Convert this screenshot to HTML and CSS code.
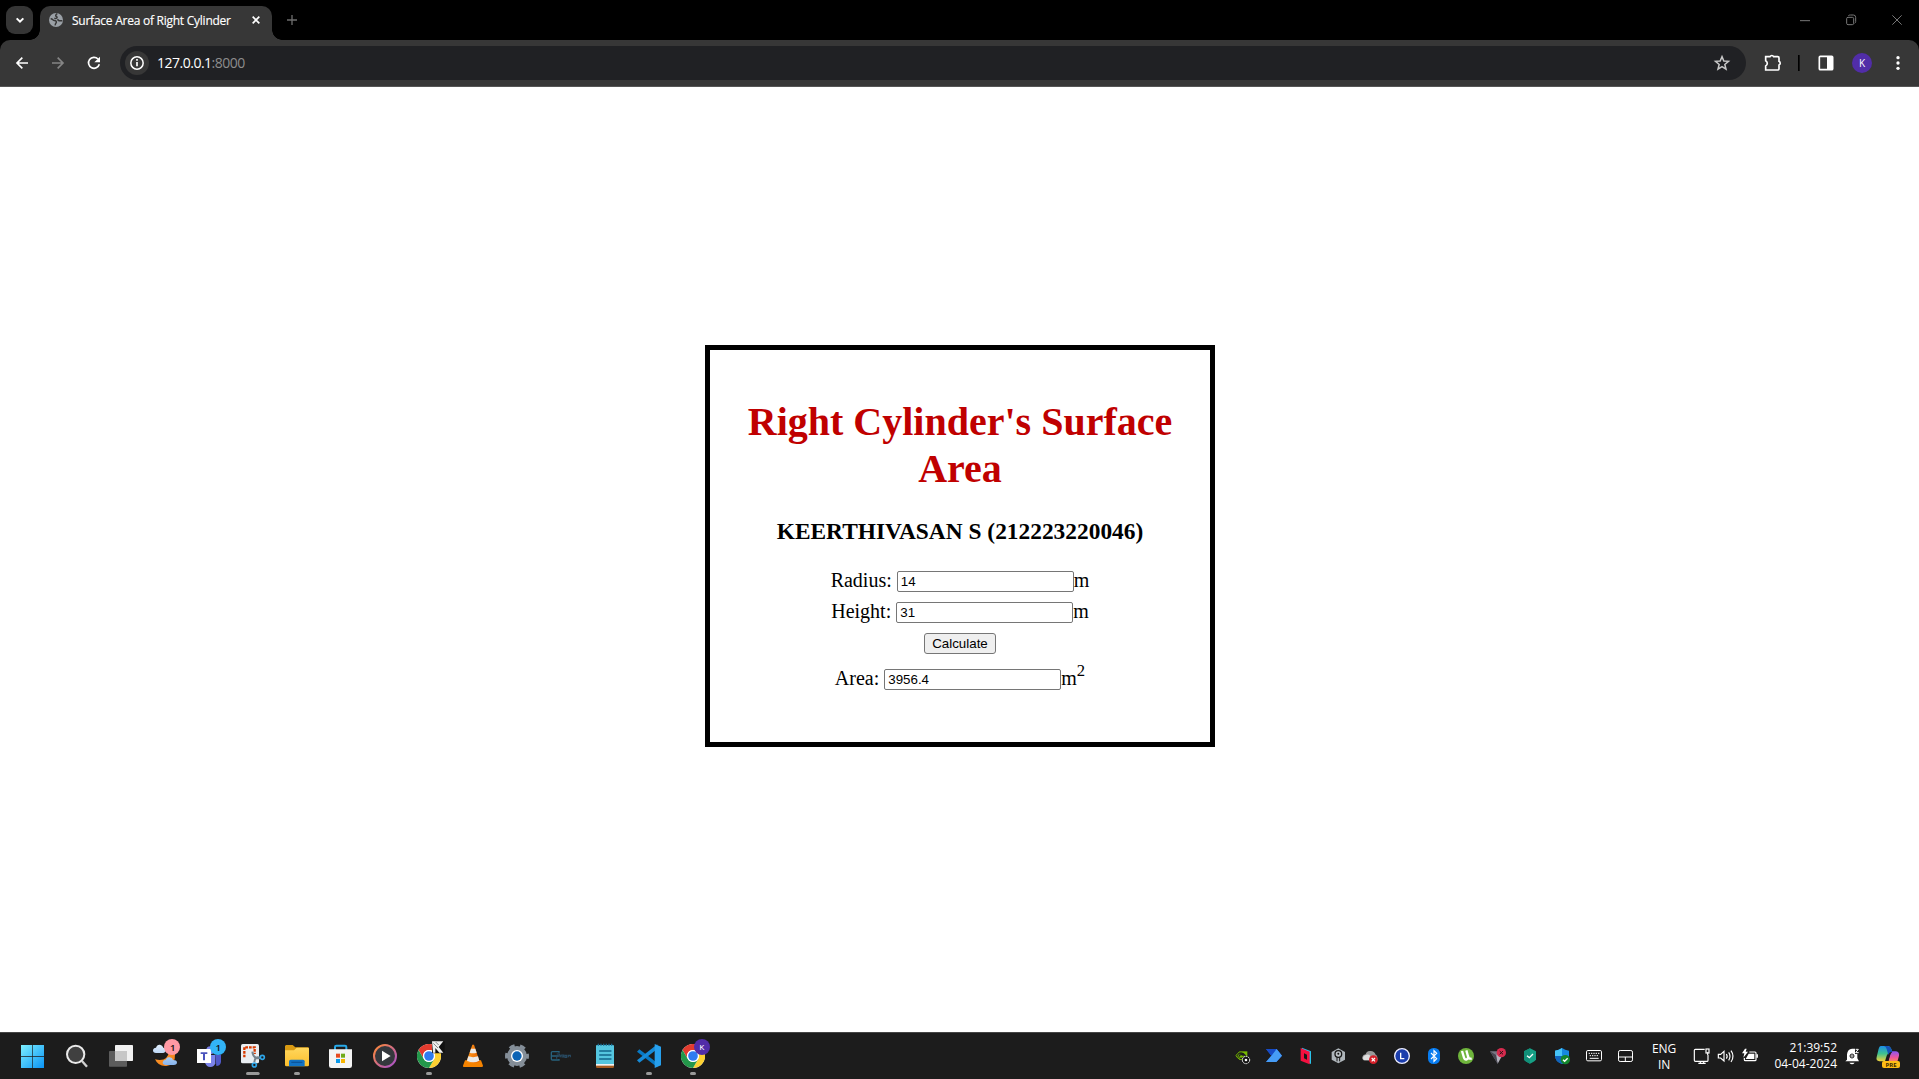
FILE: index.html
```html
<!DOCTYPE html>
<html lang="en">
<head>
<meta charset="utf-8">
<title>Surface Area of Right Cylinder</title>
<link rel="stylesheet" href="styles.css">
</head>
<body>
<svg class="defs" width="0" height="0">
  <defs>
    <linearGradient id="win" x1="0" y1="0" x2="1" y2="1"><stop offset="0" stop-color="#7df0ff"/><stop offset="1" stop-color="#0a93f5"/></linearGradient>
    <linearGradient id="folder" x1="0" y1="0" x2="0" y2="1"><stop offset="0" stop-color="#ffd75e"/><stop offset="1" stop-color="#fcbe2b"/></linearGradient>
    <linearGradient id="media" x1="0" y1="0" x2="1" y2="1"><stop offset="0" stop-color="#ff8a34"/><stop offset="1" stop-color="#a44fd0"/></linearGradient>
    <linearGradient id="moon" x1="0" y1="0" x2="1" y2="1"><stop offset="0" stop-color="#ff9d2e"/><stop offset="1" stop-color="#f07a16"/></linearGradient>
    <linearGradient id="cloud" x1="0" y1="0" x2="0" y2="1"><stop offset="0" stop-color="#e3effc"/><stop offset="1" stop-color="#86b4ee"/></linearGradient>
    <linearGradient id="cop1" x1="0" y1="0" x2="0" y2="1"><stop offset="0" stop-color="#1c8fe8"/><stop offset=".5" stop-color="#3ec28f"/><stop offset="1" stop-color="#f3d23a"/></linearGradient>
    <linearGradient id="cop2" x1="0" y1="0" x2="0" y2="1"><stop offset="0" stop-color="#8c55f4"/><stop offset=".6" stop-color="#f0569a"/><stop offset="1" stop-color="#fb8a5a"/></linearGradient>
    <linearGradient id="cone" x1="0" y1="0" x2="1" y2="0"><stop offset="0" stop-color="#ff9a1e"/><stop offset="1" stop-color="#e76500"/></linearGradient>
    <symbol id="chrome" viewBox="-36 -36 72 72">
      <circle r="36" fill="#fff"/>
      <path d="M-31.2-18A36 36 0 0 1 31.2-18H0A18 18 0 0 0-15.6 9Z" fill="#e33b2e"/>
      <path d="M31.2-18A36 36 0 0 1 0 36L15.6 9A18 18 0 0 0 0-18Z" fill="#fdd131"/>
      <path d="M0 36A36 36 0 0 1-31.2-18L-15.6 9A18 18 0 0 0 15.6 9Z" fill="#23974a"/>
      <circle r="18" fill="#fff"/><circle r="14.5" fill="#2f7cf0"/>
    </symbol>
  </defs>
</svg>

<header class="tabstrip">
  <button class="tab-search" aria-label="Search tabs"><svg width="27" height="28" viewBox="18 18 81 84"><path d="M50 55l10 10 10-10" fill="none" stroke="#fff" stroke-width="6"/></svg></button>
  <div class="tab">
    <svg width="16" height="16" viewBox="144 36 48 48"><circle cx="168" cy="60" r="21" fill="#9aa0a6"/><path d="M152 56q4 0 6 3t8 3q5 2 2 7-3 3-2 7M172 41q-7 4-4 8 4 1 3 4-3 3-8 2M187 62h-10l-5-4" fill="none" stroke="#373737" stroke-width="4.500"/></svg>
    <span class="tab-title">Surface Area of Right Cylinder</span>
    <svg class="tab-close" width="16" height="16" viewBox="744 36 48 48"><path d="M758 50l20 20M778 50l-20 20" stroke="#fff" stroke-width="5"/></svg>
  </div>
  <svg class="new-tab" width="20" height="20" viewBox="846 30 60 60"><path d="M876 45v30M861 60h30" stroke="#6c6c6c" stroke-width="4"/></svg>
  <svg class="window-controls" width="138" height="40" viewBox="303 0 414 120"><g fill="none" stroke="#777" stroke-width="3"><path d="M360 62h30M637 46l28 28M665 46l-28 28"/><rect x="500" y="52" width="21" height="22" rx="4"/><path d="M505 47q2-2 6-2h9q7 0 7 7v13q0 3-3 5"/></g></svg>
</header>

<nav class="toolbar">
  <svg class="nav-icons" width="108" height="46" viewBox="0 120 324 138"><g fill="none" stroke-width="5"><path d="M84 189H53M67 173l-16 16 16 16" stroke="#fff"/><path d="M156 189h31M173 173l16 16-16 16" stroke="#858585"/><path d="M298 193a16.500 16.500 0 1 1-4-16" stroke="#fff"/></g><path d="M300 170v17h-17z" fill="#fff"/></svg>
  <div class="omnibox">
    <svg class="site-info" width="24" height="24" viewBox="375 153 72 72"><circle cx="411" cy="189" r="18.5" fill="none" stroke="#fff" stroke-width="4.5"/><path d="M411 186v13M411 177v5" stroke="#fff" stroke-width="5"/></svg>
    <span class="url">127.0.0.1<span class="port">:8000</span></span>
    <svg class="star" width="20" height="20" viewBox="96 159 60 60"><path d="M126 170l5.5 13 14 1-11 9.500 3.500 14-12-7.500-12 7.500 3.500-14-11-9.500 14-1z" fill="none" stroke="#c7c7c7" stroke-width="4.500"/></svg>
  </div>
  <svg width="89" height="46" viewBox="237 120 267 138" class="tools">
    <path d="M257 170h13a6 6 0 0 1 11 0h12a4 4 0 0 1 4 4v10a6 6 0 0 1 0 11v11a4 4 0 0 1-4 4h-36v-12a9 9 0 0 0 0-16z" fill="none" stroke="#fff" stroke-width="5"/><rect x="354" y="165" width="5" height="48" fill="#000"/>
    <rect x="418" y="169" width="40" height="40" rx="3" fill="none" stroke="#fff" stroke-width="5"/><path d="M441 168h18v42h-18z" fill="#fff"/>
  </svg>
  <span class="avatar">K</span>
  <svg width="20" height="46" viewBox="624 120 60 138" class="menu"><g fill="#fff"><circle cx="654" cy="173" r="5"/><circle cx="654" cy="189" r="5"/><circle cx="654" cy="205" r="5"/></g></svg>
</nav>

<main class="page">
  <section class="box">
    <h1>Right Cylinder's Surface<br>Area</h1>
    <h3>KEERTHIVASAN S (212223220046)</h3>
    <form>
      <div class="row"><label for="radius">Radius:</label><input id="radius" type="text" value="14">m</div>
      <div class="row"><label for="height">Height:</label><input id="height" type="text" value="31">m</div>
      <div class="row action"><button type="button" class="calculate">Calculate</button></div>
      <div class="row"><label for="area">Area:</label><input id="area" type="text" value="3956.4">m<sup>2</sup></div>
    </form>
  </section>
</main>

<footer class="taskbar">
  <div class="apps">
    <svg viewBox="30 9 132 138"><path d="M63 45h34v34H63zM99 45h33v34H99zM63 81h34v33H63zM99 81h33v33H99z" fill="url(#win)"/></svg>
    <svg viewBox="162 9 132 138"><circle cx="227" cy="73" r="26" fill="#404040" stroke="#e9e9e9" stroke-width="6"/><path d="M246 93l15 17" stroke="#d0d0d0" stroke-width="7"/></svg>
    <svg viewBox="294 9 132 138"><rect x="345" y="45" width="54" height="48" rx="2" fill="#f1f1f1"/><rect x="327" y="63" width="54" height="47" rx="2" fill="#5c5c5c"/><path d="M345 63h36v30h-36z" fill="#c6c6c6"/></svg>
    <svg viewBox="426 9 132 138"><path d="M507 62q-3 35-42 26 10 22 34 20 28-4 26-36z" fill="url(#moon)"/><path d="M468 69q-9 0-9-8 1-8 9-8 3-10 12-9 8 1 10 9 8 1 8 8t-8 8zM497 105q-9 0-9-8 1-7 9-8 4-9 12-7 9 1 10 8 11 0 12 7 0 8-10 8z" fill="url(#cloud)"/><circle cx="516" cy="51" r="24" fill="#ff99a4"/><text x="518" y="62" class="ico-num">1</text></svg>
    <svg viewBox="558 9 132 138"><path d="M616 75h30v25q-3 11-15 11t-15-11z" fill="#7b83eb"/><path d="M646 74h17v22q-2 12-14 12z" fill="#5059c9"/><circle cx="631" cy="61" r="12" fill="#7b83eb"/><rect x="591" y="57" width="42" height="42" fill="#fff"/><path d="M602 67h20v5h-7v19h-6V72h-7z" fill="#4b53bc"/><circle cx="654" cy="51" r="24" fill="#32b4f6"/><text x="655" y="62" class="ico-num">1</text></svg>
    <svg viewBox="0 9 132 138"><rect x="33" y="42" width="54" height="58" rx="5" fill="#e9eef2"/><path d="M43 82V52h31v20" fill="none" stroke="#d83b01" stroke-width="7" stroke-dasharray="8 3"/><path d="M67 65q2 21 22 20M91 84q-16-7-18 12" fill="none" stroke="#78838c" stroke-width="6"/><circle cx="97" cy="82" r="6" fill="none" stroke="#2da5e8" stroke-width="5"/><circle cx="73" cy="105" r="6" fill="none" stroke="#2da5e8" stroke-width="5"/><rect x="48" y="126" width="41" height="9" rx="4.500" fill="#999"/></svg>
    <svg viewBox="132 9 132 138"><path d="M168 45h20l8 7h38q3 0 3 4v20h-72V48z" fill="#d99a12"/><path d="M165 61h27l8-8h33q4 0 4 4v48q0 4-4 4h-64q-4 0-4-4z" fill="url(#folder)"/><path d="M177 109V94q0-5 5-5h37q5 0 5 5v15z" fill="#1273c4"/><path d="M184 97h33" stroke="#0b559b" stroke-width="4"/><rect x="192" y="126" width="18" height="9" rx="4.500" fill="#999"/></svg>
    <svg viewBox="264 9 132 138"><path d="M315 62V51q0-4 4-4h26q4 0 4 4v11" fill="none" stroke="#27a9e8" stroke-width="6"/><path d="M297 58h69v49q0 7-7 7h-55q-7 0-7-7z" fill="#f4f4f4"/><path d="M318 71h12v12h-12z" fill="#e74b20"/><path d="M333 71h12v12h-12z" fill="#6fab1b"/><path d="M318 87h12v12h-12z" fill="#0b9aeb"/><path d="M333 87h12v12h-12z" fill="#f8b500"/></svg>
    <svg viewBox="396 9 132 138"><circle cx="465" cy="78" r="33" fill="#34383d" stroke="url(#media)" stroke-width="6"/><path d="M456 62v32l26-16z" fill="#fff"/></svg>
    <svg viewBox="528 9 132 138"><use href="#chrome" x="561" y="42" width="72" height="72"/><rect x="606" y="33" width="38" height="37" rx="4" fill="#111"/><path d="M606 34h34L626 51l14 17h-12L616 54v14h-7z" fill="#eee"/><path d="M610 40l14 14M617 36l9 9" stroke="#555" stroke-width="2"/><rect x="588" y="126" width="18" height="9" rx="4.500" fill="#999"/></svg>
    <svg viewBox="-30 9 132 138"><path d="M15 91h48l6 16q0 4-4 4H12q-4 0-3-4z" fill="#f58300"/><path d="M37 44h5l17 51q-20 10-40 0z" fill="url(#cone)"/><path d="M33 56h13l4 12q-11 4-21 0zM25 79q14 5 29 0l4 13q-18 9-37 0z" fill="#e9e9e9"/></svg>
    <svg viewBox="102 9 132 138"><circle cx="171" cy="78" r="23" fill="#fff" stroke="#848e98" stroke-width="14"/><circle cx="171" cy="78" r="31" fill="none" stroke="#848e98" stroke-width="10" stroke-dasharray="16.200 16.250" stroke-dashoffset="8"/><circle cx="171" cy="78" r="18" fill="#fff"/><circle cx="171" cy="78" r="14" fill="#0b63b5"/></svg>
    <svg viewBox="234 9 132 138"><path d="M297 68v-3h-20q-3 0-3 3v19q0 3 3 3h20v-3M274 78h22" fill="none" stroke="#27617c" stroke-width="4"/><path d="M290 72h8v6h-8v8M303 74l-3 8M306 75v6h5v-6zM315 76h5v6h-5zM325 82v-6h6v6" fill="none" stroke="#284a62" stroke-width="3.500"/></svg>
    <svg viewBox="366 9 132 138"><rect x="408" y="45" width="54" height="63" rx="3" fill="#54c5df"/><path d="M408 103h54v7q0 4-4 4h-46q-4 0-4-4z" fill="#a65a20"/><path d="M408 102h54v5h-54z" fill="#f2f2f2"/><path d="M413 44h45" stroke="#176b91" stroke-width="6" stroke-dasharray="4 4"/><path d="M419 63h34M419 75h34M419 87h34" stroke="#12658c" stroke-width="4" stroke-linecap="round"/></svg>
    <svg viewBox="498 9 132 138"><path d="M531 65l7-7 54 41v13z" fill="#0879c4"/><path d="M531 91l7 7 54-41V43z" fill="#168bd8"/><path d="M584 42l19 8v56l-19 8V42z" fill="#27a0ed"/><rect x="558" y="126" width="18" height="9" rx="4.500" fill="#999"/></svg>
    <svg viewBox="630 9 132 138"><use href="#chrome" x="663" y="42" width="72" height="72"/><circle cx="726" cy="51" r="24" fill="#512da8"/><text x="726" y="59" class="ico-k">K</text><rect x="690" y="126" width="18" height="9" rx="4.500" fill="#999"/></svg>
  </div>

  <div class="tray">
    <svg viewBox="21 9 96 138"><path d="M58 64h24v26H58z" fill="#76b900"/><path d="M49 78q14-18 28 0-14 14-22 2 8-11 16-3" fill="none" stroke="#1c1c1c" stroke-width="4"/><path d="M58 66q-6 4-10 11 4 8 12 11M58 73q-4 2-4 6l5 5" fill="none" stroke="#76b900" stroke-width="3"/><circle cx="78" cy="90" r="11" fill="#111" stroke="#fff" stroke-width="3" stroke-dasharray="5 2"/><circle cx="78" cy="90" r="4" fill="#fff"/></svg>
    <svg viewBox="117 9 96 138"><path d="M138 57h32l16 20-17 19h-31l16-19z" fill="#1d55d8"/><path d="M154 77l16-20 16 20-17 19h-31z" fill="#469cf5"/><path d="M138 57h30l-14 20z" fill="#174bc5"/></svg>
    <svg viewBox="213 9 96 138"><path d="M246 53l27 11v38l-27-11z" fill="#2ac3ea"/><path d="M242 54l27 11v38l-27-11z" fill="#f5103f"/><path d="M252 70l9 4v15l-9-4z" fill="#171717"/></svg>
    <svg viewBox="309 9 96 138"><path d="M355 55l20 11v23l-20 11-20-11V66z" fill="#aeb5ba"/><circle cx="355" cy="72" r="10" fill="#bbc1c5" stroke="#171717" stroke-width="4"/><path d="M351 82v12M359 82v12" stroke="#171717" stroke-width="3"/><circle cx="355" cy="71" r="3" fill="#111"/></svg>
    <svg viewBox="405 9 96 138"><path d="M434 91q-9-2-7-10 2-7 10-8 2-9 12-10 13-2 18 11 6 2 6 17z" fill="#9a9a9a"/><path d="M431 91q-7-14 9-17 13-2 16 17z" fill="#ddd"/><circle cx="460" cy="89" r="13" fill="#d5202a"/><path d="M455 84l10 10M465 84l-10 10" stroke="#fff" stroke-width="3.500"/></svg>
    <svg viewBox="501 9 96 138"><circle cx="546" cy="78" r="22" fill="#1b3dac" stroke="#eef" stroke-width="4"/><path d="M542 68v18h11" fill="none" stroke="#fff" stroke-width="4"/></svg>
    <svg viewBox="597 9 96 138"><rect x="624" y="54" width="36" height="48" rx="16" fill="#087cf0"/><path d="M633 69l17 17-8 8V62l8 8-17 17" fill="none" stroke="#fff" stroke-width="3.500"/></svg>
    <svg viewBox="3 9 96 138"><circle cx="48" cy="78" r="24" fill="#6fb53c"/><path d="M36 63l6 20q2 7 8 5 6-2 4-9l-5-18M54 78q2 11 11 7" fill="none" stroke="#fff" stroke-width="7"/></svg>
    <svg viewBox="99 9 96 138"><path d="M120 64h26l-3 37z" fill="#777683"/><path d="M143 101l16-29-16-8-4 14z" fill="#b5b4bf"/><path d="M120 64l23 37-5-26z" fill="#464650"/><circle cx="154" cy="68" r="14" fill="#d62b4e"/><path d="M149 63l10 10M159 63l-10 10" stroke="#2b1118" stroke-width="3"/></svg>
    <svg viewBox="195 9 96 138"><path d="M240 55l18 9v24q-3 7-18 13-15-6-18-13V64z" fill="#16a085"/><path d="M240 55v46q-15-6-18-13V64z" fill="#118f78"/><path d="M231 77l7 6 11-11" fill="none" stroke="#fff" stroke-width="4"/></svg>
    <svg viewBox="291 9 96 138"><path d="M336 54q9 7 21 8v16q0 16-21 24-21-8-21-24V62q12-1 21-8z" fill="#1688e0"/><path d="M336 54v24h-21V62q12-1 21-8z" fill="#46c3f7"/><path d="M336 78v24q-21-8-21-24z" fill="#1164bd"/><circle cx="346" cy="89" r="14" fill="#13862d"/><path d="M339 89l5 5 9-9" fill="none" stroke="#fff" stroke-width="4"/></svg>
    <svg viewBox="387 9 96 138"><rect x="409.500" y="61.500" width="45" height="31" rx="4" fill="none" stroke="#fff" stroke-width="3"/><path d="M416 70h33M419 77h28" stroke="#fff" stroke-width="3" stroke-dasharray="4 3"/><path d="M419 85h27" stroke="#fff" stroke-width="3"/></svg>
    <svg viewBox="483 9 96 138"><rect x="505.500" y="61.500" width="42" height="33" rx="5" fill="none" stroke="#fff" stroke-width="3"/><path d="M505 81h42M526 81v13" stroke="#fff" stroke-width="3"/></svg>
    <div class="lang">ENG<br>IN</div>
    <div class="system">
      <svg viewBox="30 9 72 138"><path d="M74 58H46q-3 0-3 3v30q0 3 3 3h36q2 0 2-3V75M55 100h22M61 93v7M71 93v7M83 75v-8" fill="none" stroke="#fff" stroke-width="3.500"/><rect x="78" y="57" width="9" height="12" fill="none" stroke="#fff" stroke-width="3.500"/></svg>
      <svg viewBox="102 9 72 138"><path d="M115 73h7l10-9v29l-10-9h-7zM139 72q5 7 0 14M146 67q8 12 0 24M153 62q12 17 0 34" fill="none" stroke="#fff" stroke-width="3.500"/></svg>
      <svg viewBox="174 9 72 138"><path d="M208 66h17q3 0 3 3v20q0 3-3 3h-29q-3 0-3-3v-5M232 73v10" fill="none" stroke="#fff" stroke-width="3.500"/><path d="M206 71h17v16h-26zM195 56l-9 14h7l-3 13 14-18h-7l3-9z" fill="#fff"/></svg>
    </div>
    <div class="clock">21:39:52<br>04-04-2024</div>
    <svg class="bell" viewBox="480 9 72 138"><path d="M501 89V73q2-16 15-17h9v14h7v15l5 9h-41zM508 98h16q-8 10-16 0z" fill="#fff"/><circle cx="516" cy="78" r="6" fill="none" stroke="#1c1c1c" stroke-width="3"/><path d="M511 78h10" stroke="#1c1c1c" stroke-width="2.500"/><path d="M525 54h14v18h-14z" fill="#1c1c1c"/><path d="M527 58h8l-8 10h9" fill="none" stroke="#fff" stroke-width="3"/></svg>
    <svg class="copilot" viewBox="576 9 96 138"><path d="M602 48h22q7 0 10 9l4 11h-8q-7 0-10 9l-5 17h-17q-11-2-8-13l6-25q2-8 6-8z" fill="url(#cop1)"/><path d="M631 64h17q11 2 9 13l-5 18h-28l7-24z" fill="url(#cop2)"/><path d="M622 48q8 0 12 9l3 8q-9 1-12 10l-5-18q-2-8-8-9z" fill="#1553b8"/><path d="M625 75q3-10 12-10-5 4-7 12l-5 18h-8z" fill="#1c1c1c"/><rect x="606" y="93" width="54" height="21" rx="6" fill="#ffbd16"/><text x="633" y="110" class="ico-pre">PRE</text></svg>
  </div>
</footer>
</body>
</html>
```
FILE: styles.css
```css
* { box-sizing: border-box; }
html, body { height: 100%; margin: 0; overflow: hidden; }
body { display: flex; flex-direction: column; background: #fff; color: #000; }
svg { display: block; flex: none; }
.defs { position: absolute; }

/* Browser tab strip */
.tabstrip { display: flex; align-items: flex-start; height: 40px; background: #000; font-family: "Open Sans", "Noto Sans", sans-serif; }
.tab-search { margin: 6px 7px 0 6px; width: 27px; height: 28px; padding: 0; border: 0; border-radius: 9px; background: #353535; }
.tab { position: relative; display: flex; align-items: center; width: 232px; height: 34px; margin-top: 6px; padding: 0 8px 6px; border-radius: 10px 10px 0 0; background: #373737; }
.tab::before, .tab::after { content: ""; position: absolute; bottom: 0; width: 10px; height: 10px; }
.tab::before { left: -10px; background: radial-gradient(circle at 0 0, transparent 9.5px, #373737 10px); }
.tab::after { right: -10px; background: radial-gradient(circle at 100% 0, transparent 9.5px, #373737 10px); }
.tab-title { margin-left: 8px; color: #fff; font-size: 12px; letter-spacing: -0.25px; white-space: nowrap; -webkit-text-stroke: 0.15px #fff; }
.tab-close { margin-left: auto; }
.new-tab { margin: 10px 0 0 10px; }
.window-controls { margin-left: auto; }

/* Browser toolbar */
.toolbar { display: flex; align-items: center; height: 47px; border-bottom: 1px solid #555; background: #373737; border-radius: 10px 10px 0 0; font-family: "Open Sans", "Noto Sans", sans-serif; }
body::before { content: ""; position: absolute; z-index: -1; top: 0; left: 0; width: 100%; height: 60px; background: #000; }
.omnibox { display: flex; align-items: center; flex: 1; height: 34px; margin-left: 12px; padding: 0 14px 0 5px; border-radius: 17px; background: #202124; }
.site-info { border-radius: 50%; background: #373737; }
.url { flex: 1; margin: -1px 0 0 8px; color: #fff; font-size: 14px; letter-spacing: -0.5px; }
.port { color: #8d8d8d; }
.tools { margin: 0 4px 0 13px; }
.avatar { width: 20px; height: 20px; margin-right: 16px; border-radius: 50%; background: #512da8; color: #fff; font-size: 10px; line-height: 20px; text-align: center; }
.menu { margin-right: 11px; }

/* Calculator page */
.page { flex: 1; min-height: 0; font-family: "Liberation Serif", "Times New Roman", serif; }
.box { width: 510px; height: 402px; margin: 258px 0 0 705px; padding-top: 48px; border: 5px solid #000; font-size: 20px; text-align: center; }
h1 { margin: 0; color: #c00000; font-size: 40px; line-height: 47px; }
h3 { margin: 26px 0 24px; font-size: 23.4px; line-height: 27px; }
.row { display: flex; justify-content: center; align-items: baseline; height: 31px; line-height: 23px; }
.row.action { height: 36px; }
label { margin-right: 5px; }
input { align-self: flex-start; width: 177px; height: 21px; margin: 2px 0 0; padding: 1px 3px; border: 1px solid #767676; border-radius: 2px; font: 13.333px "Liberation Sans", Arial, sans-serif; }
.calculate { align-self: flex-start; width: 72px; height: 21px; margin-top: 2px; padding: 0; border: 1px solid #767676; border-radius: 3px; background: #efefef; font: 13.333px "Liberation Sans", Arial, sans-serif; }
sup { align-self: flex-start; margin-top: -6px; font-size: 16.67px; line-height: 19px; }

/* Taskbar */
.taskbar { display: flex; justify-content: space-between; height: 47px; padding: 0 15px 0 10px; border-top: 1px solid #454545; background: #1c1c1c; color: #fff; font-family: "Open Sans", "Noto Sans", sans-serif; font-size: 12px; line-height: 16px; }
.apps, .tray, .system { display: flex; }
.apps svg { width: 44px; height: 46px; }
.tray svg { width: 32px; height: 46px; }
.lang { width: 42px; padding-top: 8px; text-align: center; letter-spacing: -0.1px; }
.system { margin-left: 5px; }
.system svg, .tray .bell { width: 24px; }
.clock { width: 75px; padding-top: 7px; text-align: right; }
.bell { margin: 0 8px 0 3px; }
.ico-num { font: 600 29px "Open Sans", sans-serif; fill: #111; text-anchor: middle; }
.ico-k { font: 23px Roboto, sans-serif; fill: #fff; text-anchor: middle; }
.ico-pre { font: bold 18px "Open Sans", sans-serif; fill: #3a2a00; text-anchor: middle; }
```
